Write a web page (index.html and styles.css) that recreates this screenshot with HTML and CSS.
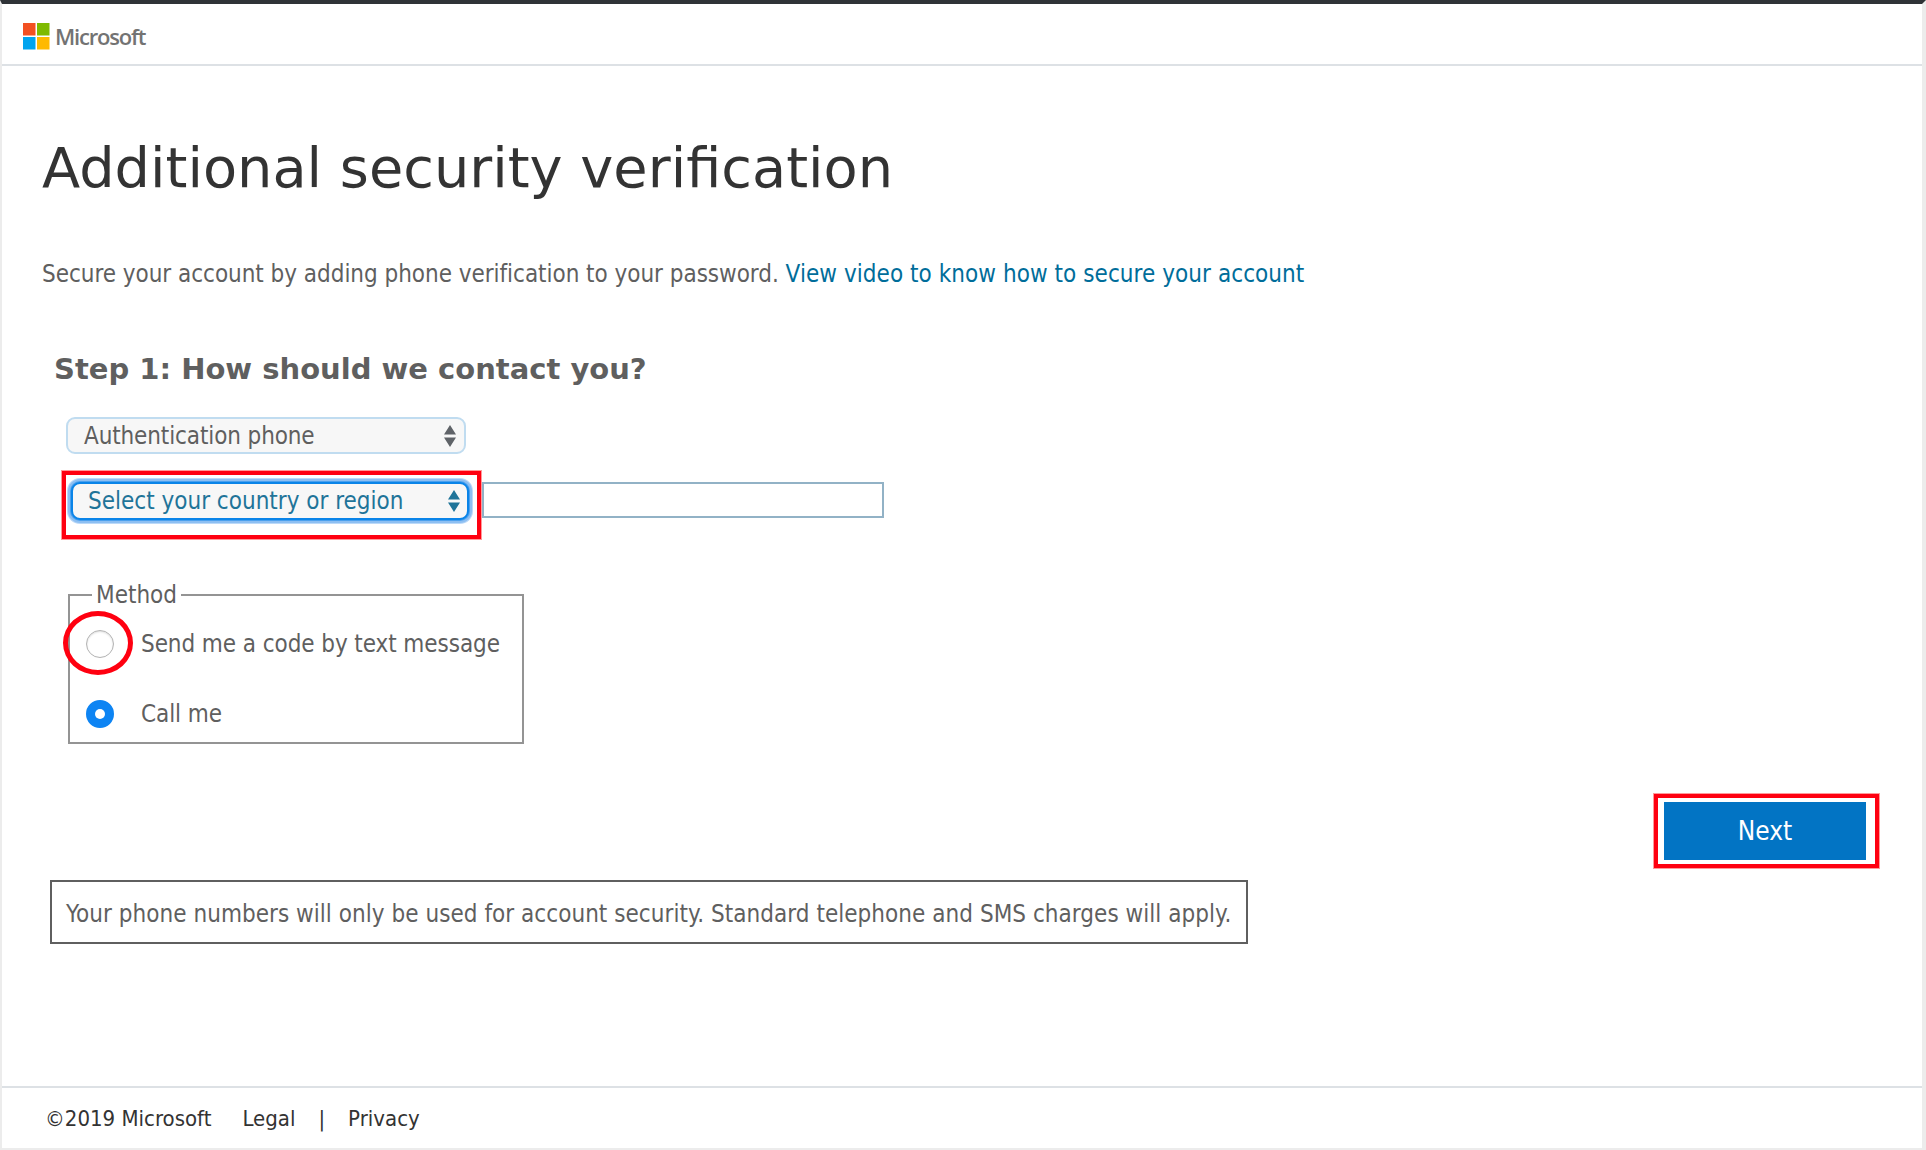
FILE: index.html
```html
<!DOCTYPE html>
<html lang="en">
<head>
<meta charset="utf-8">
<title>Additional security verification</title>
<link rel="stylesheet" href="styles.css">
</head>
<body>
<div class="page">
  <header class="topbar">
    <svg class="ms-logo" width="27" height="27" viewBox="0 0 27 27" aria-hidden="true">
      <rect x="0" y="0" width="12.5" height="12.5" fill="#f25022"/>
      <rect x="14" y="0" width="12.5" height="12.5" fill="#7fba00"/>
      <rect x="0" y="14" width="12.5" height="12.5" fill="#00a4ef"/>
      <rect x="14" y="14" width="12.5" height="12.5" fill="#ffb900"/>
    </svg>
    <span class="ms-word">Microsoft</span>
  </header>
  <main class="content">
    <h1 class="title">Additional security verification</h1>
    <p class="intro">Secure your account by adding phone verification to your password. <a class="link" href="#">View video to know how to secure your account</a></p>
    <h2 class="step">Step 1: How should we contact you?</h2>
    <div class="select select-plain">
      <span>Authentication phone</span>
      <svg width="12" height="22" viewBox="0 0 12 22" aria-hidden="true"><path d="M6 0l6 9.5H0zM6 22l6-9.5H0z" fill="#5f6368"/></svg>
    </div>
    <div class="phone-row">
      <div class="red-box red-box-select">
        <div class="select select-focus">
          <span>Select your country or region</span>
          <svg width="12" height="22" viewBox="0 0 12 22" aria-hidden="true"><path d="M6 0l6 9.5H0zM6 22l6-9.5H0z" fill="#1f7499"/></svg>
        </div>
      </div>
      <div class="phone-input"></div>
    </div>
    <fieldset class="method">
      <legend class="method-legend">Method</legend>
      <div class="option">
        <span class="radio"></span>
        <span>Send me a code by text message</span>
        <span class="ring"></span>
      </div>
      <div class="option">
        <span class="radio radio-on"></span>
        <span>Call me</span>
      </div>
    </fieldset>
    <div class="actions">
      <div class="red-box red-box-next"><button class="next" type="button">Next</button></div>
    </div>
    <div class="note">Your phone numbers will only be used for account security. Standard telephone and SMS charges will apply.</div>
  </main>
  <footer class="footer">
    <span class="copyright">©2019 Microsoft</span>
    <a href="#">Legal</a>
    <span>|</span>
    <a href="#">Privacy</a>
  </footer>
</div>
</body>
</html>
```
FILE: styles.css
```css
* { box-sizing: border-box; }
html, body { margin: 0; height: 100%; background: #fff; }
body { font-family: "DejaVu Sans Condensed", "DejaVu Sans", sans-serif; color: #5f5f5f; overflow: hidden; }
.page {
  height: 1150px;
  display: flex;
  flex-direction: column;
  border-top: 4px solid #2f3337;
  border-left: 2px solid #ececec;
  border-right: 4px solid #ececec;
  border-bottom: 2px solid #ececec;
}
.topbar {
  height: 62px;
  flex: none;
  display: flex;
  align-items: center;
  gap: 5px;
  padding: 4px 0 0 21px;
  border-bottom: 2px solid #dde1e5;
}
.ms-word { font-family: "Open Sans", sans-serif; font-size: 22px; font-weight: 600; color: #737373; letter-spacing: -1.2px; }
.content { flex: 1; padding: 0 0 0 40px; }
.title { margin: 69px 0 0; font-family: "DejaVu Sans", sans-serif; font-weight: 400; font-size: 55.8px; line-height: 66px; color: #333; }
.intro { margin: 57px 0 0; font-size: 24px; line-height: 32px; color: #5f5f5f; letter-spacing: -0.035px; }
.link { color: #006d9a; text-decoration: none; letter-spacing: 0.055px; }
.step { margin: 61px 0 0 12px; font-family: "DejaVu Sans", sans-serif; font-size: 29px; line-height: 36px; font-weight: 700; color: #5f5f5f; }
.select {
  display: flex;
  align-items: center;
  justify-content: space-between;
  font-size: 24px;
  background: #f7f7f7;
}
.select-plain {
  width: 400px;
  height: 37px;
  margin: 30px 0 0 24px;
  padding: 0 8px 0 16px;
  border: 2px solid #c0dcf0;
  border-radius: 9px;
  letter-spacing: -0.12px;
}
.phone-row { display: flex; align-items: flex-start; margin: 17px 0 0 20px; }
.red-box { border: 4px solid #ff0010; box-shadow: 0 0 0 1px #ff9a9a; }
.red-box-select { width: 419px; height: 68px; padding: 7px 0 0 5px; }
.select-focus {
  width: 398px;
  height: 38px;
  padding: 0 7px 0 15px;
  color: #1f7499;
  border: 2px solid #0a84e8;
  border-radius: 9px;
  box-shadow: 0 0 0 1px #4aa0ee, 0 0 0 3px #8dbff2, 0 0 0 4px #bcd9f8;
}
.phone-input { width: 402px; height: 36px; margin: 11px 0 0 1px; border: 2px solid #92b2c6; }
.method {
  width: 456px;
  height: 163px;
  margin: 42px 0 0 26px;
  padding: 0 0 0 16px;
  border: 2px solid #949494;
  min-width: 0;
}
.method-legend { font-size: 24px; line-height: 28px; padding: 0 4px; margin-left: 6px; }
.option { display: flex; align-items: center; gap: 27px; font-size: 24px; letter-spacing: -0.08px; height: 56px; margin-top: 14px; position: relative; }
.option:first-of-type { margin-top: 7px; }
.radio { width: 28px; height: 28px; border-radius: 50%; background: #fff; border: 1px solid #b3b3b3; box-shadow: inset 0 1px 2px #ddd; flex: none; }
.radio-on { background: #0d84f3; border: 9px solid #0d84f3; position: relative; box-shadow: none; }
.radio-on::after { content: ""; position: absolute; inset: 0; background: #fff; border-radius: 50%; }
.ring { position: absolute; left: -23px; top: -5px; width: 70px; height: 64px; border: 5px solid #ff0010; border-radius: 50%; }
.actions { display: flex; justify-content: flex-end; padding-right: 43px; margin-top: 50px; }
.red-box-next { width: 225px; height: 74px; padding: 4px 9px 4px 6px; }
.next { display: block; width: 100%; height: 100%; border: 0; background: #0274c4; color: #fff; font-family: inherit; font-size: 26px; }
.note { width: 1198px; height: 64px; margin: 12px 0 0 8px; padding: 4px 0 0 14px; display: flex; align-items: center; border: 2px solid #5f5f5f; font-size: 24px; letter-spacing: 0.035px; white-space: nowrap; }
.footer { flex: none; height: 62px; border-top: 2px solid #dde1e5; display: flex; align-items: center; gap: 23px; padding-left: 43px; font-size: 22px; color: #333; }
.copyright { margin-right: 8px; }
.footer a { color: #333; text-decoration: none; }
```
